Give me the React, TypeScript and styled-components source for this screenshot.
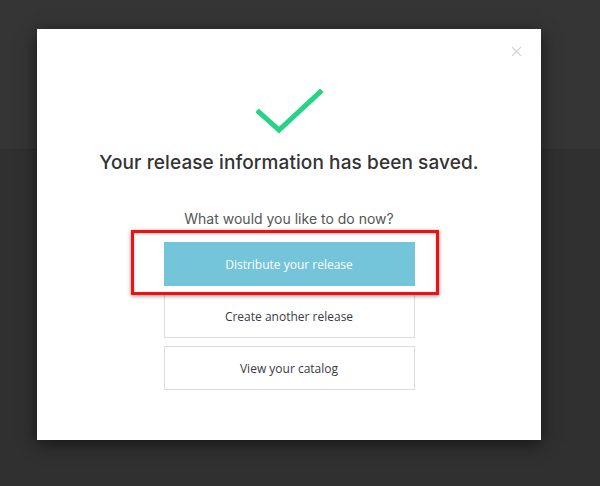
import styled, { createGlobalStyle } from 'styled-components';

const GlobalStyle = createGlobalStyle`
  html, body {
    margin: 0;
    padding: 0;
    background: #303030;
  }
  body {
    font-family: Inter, "Noto Sans", sans-serif;
  }
`;

function App(): JSX.Element {
  return (
    <>
      <GlobalStyle />
      <Page>
        <TopBand />
        <Overlay>
          <Modal>
            <CloseButton aria-label='close'>
              <svg width='11' height='11' viewBox='0 0 11 11'>
                <path d='M1 1L10 10M10 1L1 10' stroke='#d4d4d4' strokeWidth='1.2' />
              </svg>
            </CloseButton>
            <Check width='68' height='46' viewBox='0 0 68 46'>
              <path
                d='M3 23L23 41L64 3'
                fill='none'
                stroke='#25d486'
                strokeWidth='5'
                strokeLinecap='square'
              />
            </Check>
            <Title>Your release information has been saved.</Title>
            <Prompt>What would you like to do now?</Prompt>
            <Actions>
              <Highlighted>
                <ActionButton primary>Distribute your release</ActionButton>
                <RedMark />
              </Highlighted>
              <ActionButton>Create another release</ActionButton>
              <ActionButton>View your catalog</ActionButton>
            </Actions>
          </Modal>
        </Overlay>
      </Page>
    </>
  );
}

export default App;

const Page = styled.div`
  position: relative;
  width: 600px;
  height: 486px;
  overflow: hidden;
  background: #303030;
`;

const TopBand = styled.div`
  height: 149px;
  background: #353535;
  border-bottom: 1px solid #2c2c2c;
`;

const Overlay = styled.div`
  position: absolute;
  inset: 0;
  padding: 29px 0 0 37px;
`;

const Modal = styled.div`
  position: relative;
  box-sizing: border-box;
  width: 504px;
  height: 411px;
  background: #fff;
  box-shadow: 0 4px 16px rgba(0, 0, 0, 0.55);
  display: flex;
  flex-direction: column;
  align-items: center;
  padding-top: 60px;
`;

const CloseButton = styled.button`
  position: absolute;
  top: 17px;
  right: 19px;
  border: 0;
  background: none;
  padding: 0;
  width: 11px;
  height: 11px;
  display: flex;
  cursor: pointer;
`;

const Check = styled.svg`
  display: block;
  margin-left: 2px;
`;

const Title = styled.h2`
  margin: 15px 0 0;
  font-family: Inter, "Noto Sans", sans-serif;
  font-size: 19px;
  font-weight: 500;
  color: #333;
  line-height: 26px;
  letter-spacing: 0.1px;
`;

const Prompt = styled.p`
  margin: 34px 0 0;
  font-family: Inter, "Noto Sans", sans-serif;
  font-size: 14px;
  color: #555;
  line-height: 18px;
`;

const Actions = styled.div`
  margin-top: 14px;
  display: flex;
  flex-direction: column;
  gap: 8px;
`;

const Highlighted = styled.div`
  position: relative;
`;

const RedMark = styled.div`
  position: absolute;
  top: -12px;
  bottom: -9px;
  left: -33px;
  right: -24px;
  border: 3px solid #ee1111;
  box-shadow: 0 1px 4px rgba(0, 0, 0, 0.45), inset 0 1px 3px rgba(0, 0, 0, 0.25);
  pointer-events: none;
`;

const ActionButton = styled.button<{ primary?: boolean }>`
  box-sizing: border-box;
  width: 251px;
  height: 44px;
  display: flex;
  align-items: center;
  justify-content: center;
  font-family: "Open Sans", "Noto Sans", sans-serif;
  font-size: 12px;
  cursor: pointer;
  background: ${(p) => (p.primary ? '#74c4da' : '#fff')};
  color: ${(p) => (p.primary ? '#fff' : '#3a3a44')};
  border: 1px solid ${(p) => (p.primary ? '#74c4da' : '#dcdcdc')};
  padding: 0;
`;
